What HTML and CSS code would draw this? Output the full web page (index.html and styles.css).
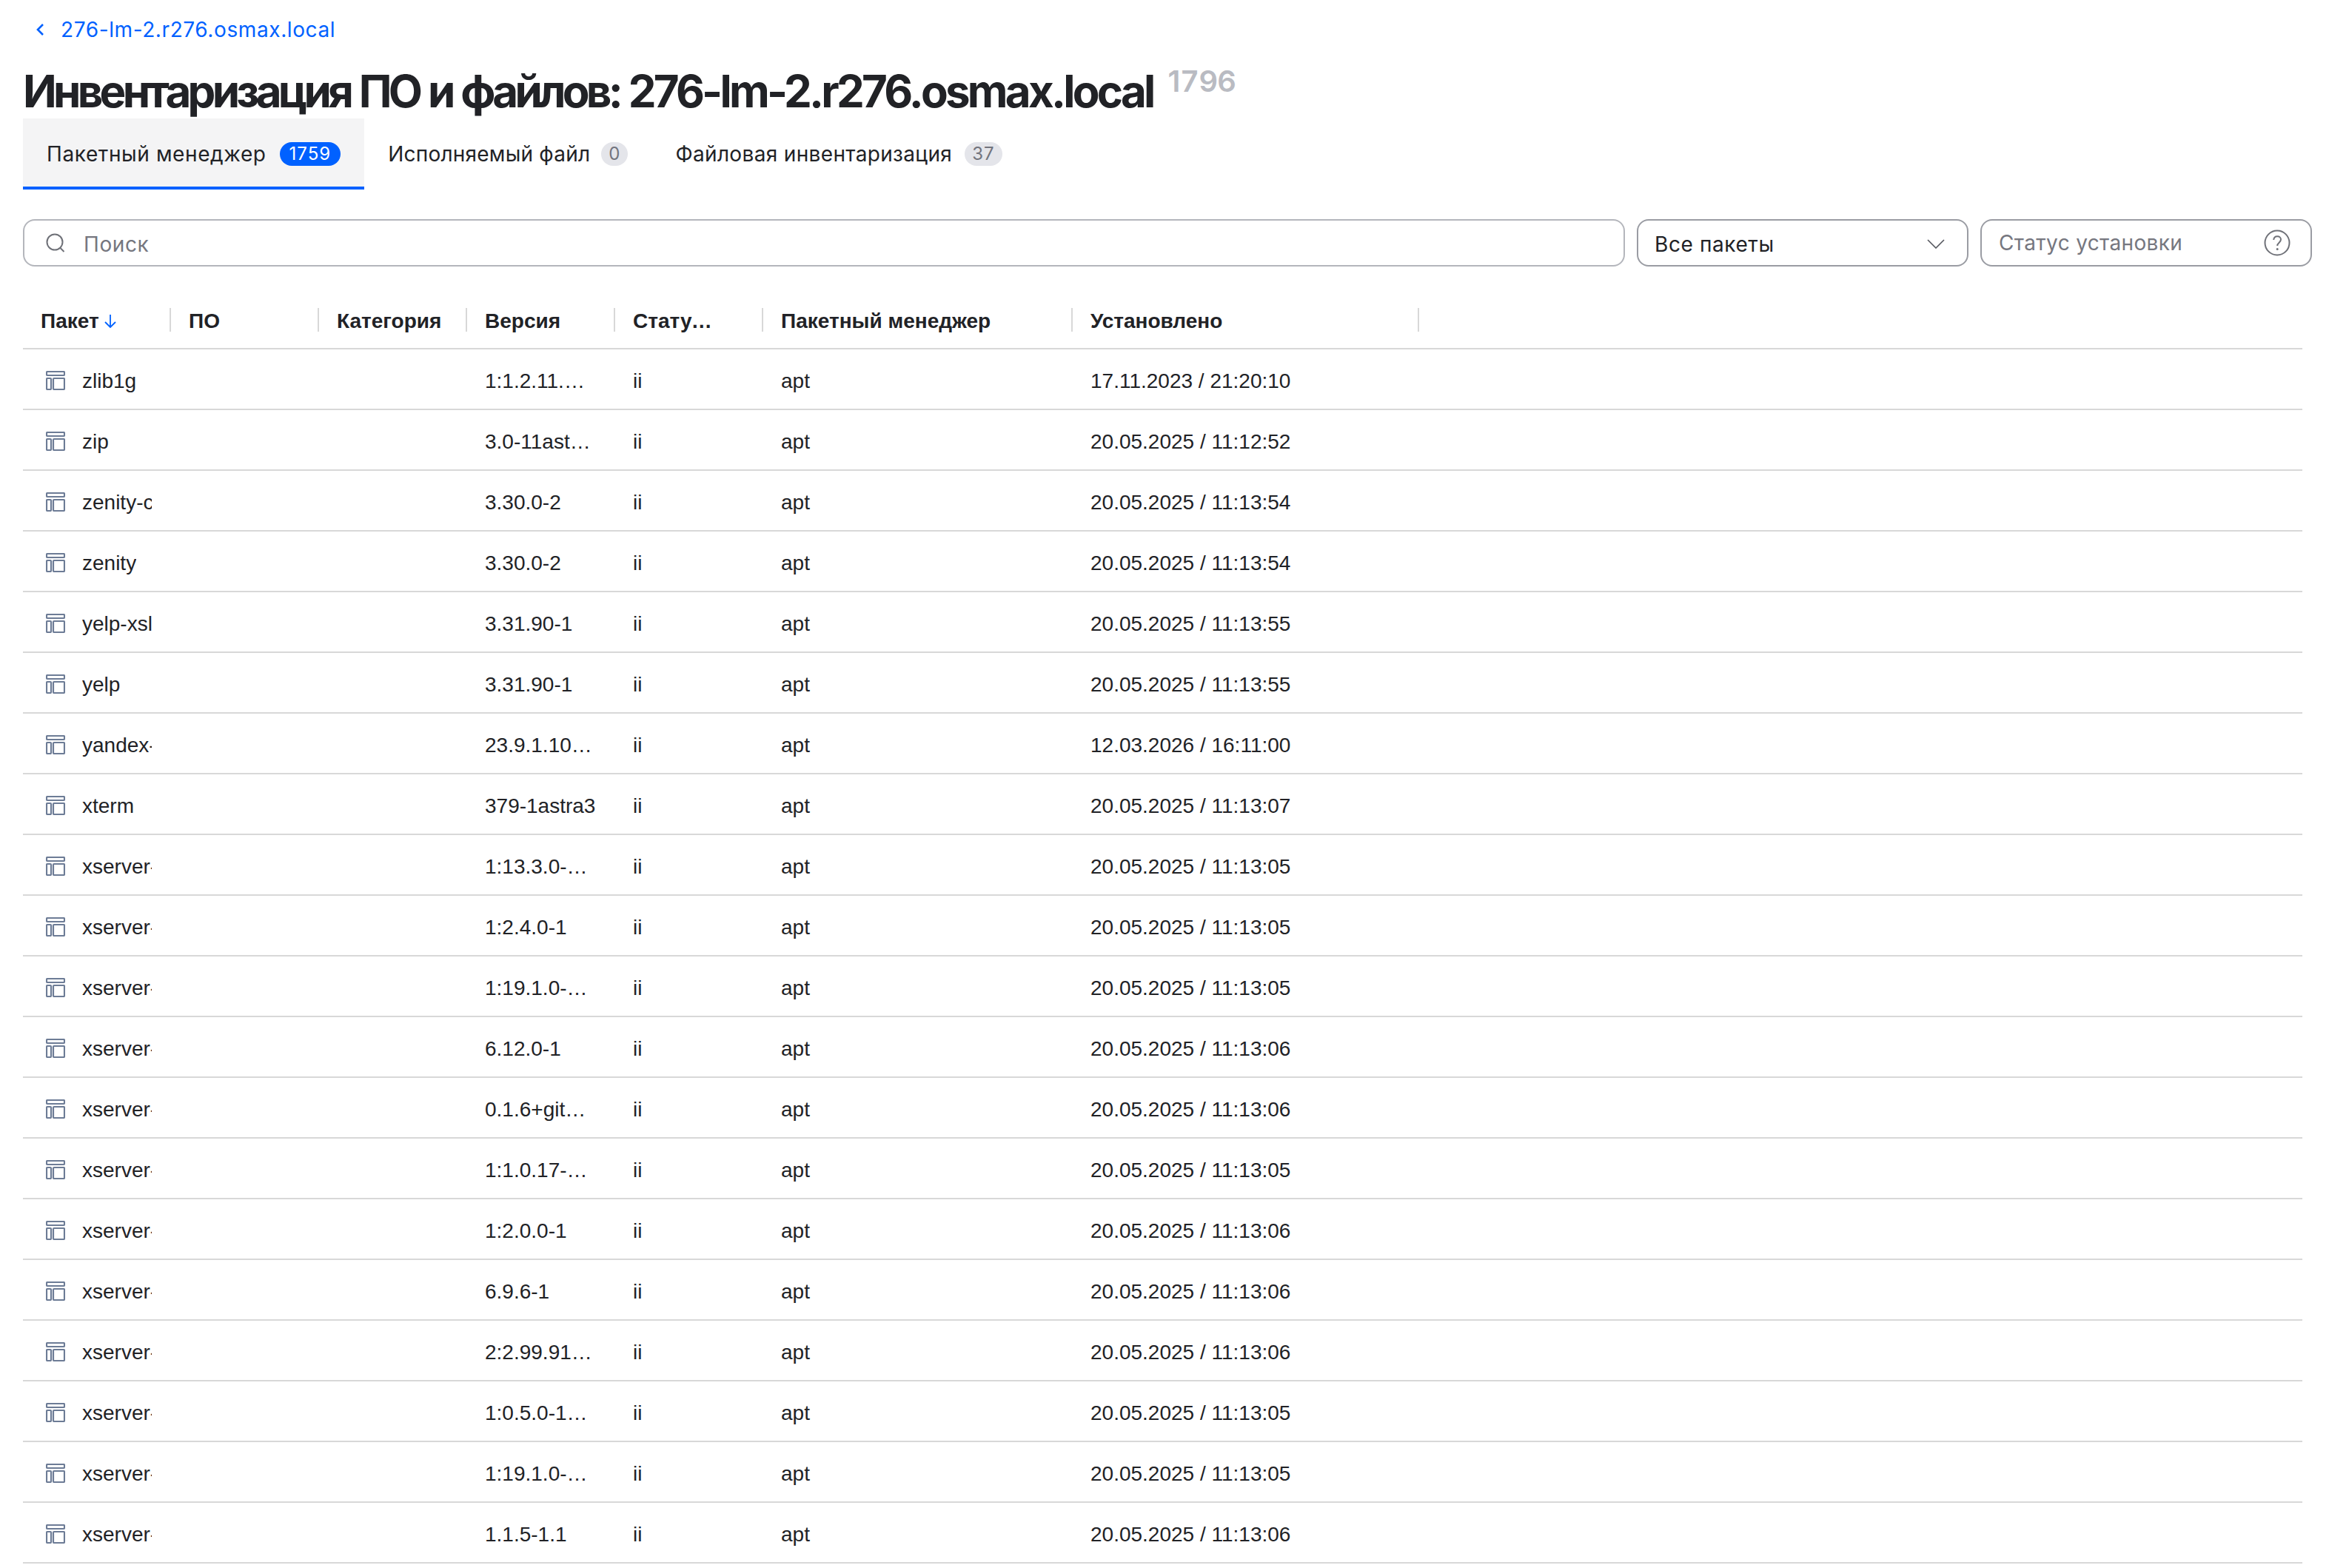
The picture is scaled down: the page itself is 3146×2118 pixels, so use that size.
FILE: index.html
```html
<!DOCTYPE html>
<html lang="ru">
<head>
<meta charset="utf-8">
<title>Инвентаризация ПО и файлов</title>
<link rel="stylesheet" href="styles.css">
</head>
<body>
<main class="page">
  <a class="back" href="#">
    <svg class="back-icon" viewBox="0 0 12 20"><path d="M10 3 3 10l7 7"/></svg>
    <span>276-lm-2.r276.osmax.local</span>
  </a>
  <div class="title-row">
    <h1 class="title">Инвентаризация ПО и файлов: <span class="title-host">276-lm-2.r276.osmax.local</span></h1>
    <span class="title-count"><span class="count-a">17</span><span class="count-b">96</span></span>
  </div>
  <nav class="tabs">
    <a class="tab tab-active"><span>Пакетный менеджер</span><span class="badge badge-blue">1759</span></a>
    <a class="tab tab-b"><span>Исполняемый файл</span><span class="badge">0</span></a>
    <a class="tab tab-c"><span>Файловая инвентаризация</span><span class="badge">37</span></a>
  </nav>
  <div class="filters">
    <label class="field field-search">
      <svg class="search-icon" viewBox="0 0 28 28"><circle cx="13" cy="13" r="10.5"/><path d="m20.5 21 5 5"/></svg>
      <span class="placeholder">Поиск</span>
    </label>
    <div class="field field-select">
      <span class="value">Все пакеты</span>
      <svg class="chevron" viewBox="0 0 24 14"><path d="M1 2l11 11L23 2"/></svg>
    </div>
    <div class="field field-status">
      <span class="placeholder">Статус установки</span>
      <svg class="help" viewBox="0 0 36 36"><circle cx="18" cy="18" r="16.5"/><path d="M13.2 14c.3-3 2.3-4.7 5-4.7 2.800 0 4.800 1.800 4.800 4.300 0 4-4.800 4.200-4.800 8.400"/><circle class="help-dot" cx="18.200" cy="26.500" r="1.500"/></svg>
    </div>
  </div>
  <div class="table">
    <div class="row head">
      <div class="th sep"><span>Пакет</span><svg class="sort" viewBox="0 0 18 20"><path d="M9 1v17M2 11l7 7 7-7"/></svg></div>
      <div class="th sep">ПО</div>
      <div class="th sep">Категория</div>
      <div class="th sep">Версия</div>
      <div class="th sep th-narrow"><span class="ell">Статус установки</span></div>
      <div class="th sep">Пакетный менеджер</div>
      <div class="th sep">Установлено</div>
    </div>
    <div class="row"><div class="td name"><svg class="pkg" viewBox="0 0 26 26"><rect x="1" y="1" width="24" height="5" rx="1"/><rect x="1" y="10" width="6" height="15" rx="1"/><rect x="10" y="10" width="15" height="15" rx="1"/></svg><span class="clip">zlib1g</span></div><div class="td"></div><div class="td"></div><div class="td ver"><span class="ell">1:1.2.11.dfsg-2+deb10u1</span></div><div class="td">ii</div><div class="td">apt</div><div class="td">17.11.2023 / 21:20:10</div></div>
    <div class="row"><div class="td name"><svg class="pkg" viewBox="0 0 26 26"><rect x="1" y="1" width="24" height="5" rx="1"/><rect x="1" y="10" width="6" height="15" rx="1"/><rect x="10" y="10" width="15" height="15" rx="1"/></svg><span class="clip">zip</span></div><div class="td"></div><div class="td"></div><div class="td ver"><span class="ell">3.0-11astra1+b1</span></div><div class="td">ii</div><div class="td">apt</div><div class="td">20.05.2025 / 11:12:52</div></div>
    <div class="row"><div class="td name"><svg class="pkg" viewBox="0 0 26 26"><rect x="1" y="1" width="24" height="5" rx="1"/><rect x="1" y="10" width="6" height="15" rx="1"/><rect x="10" y="10" width="15" height="15" rx="1"/></svg><span class="clip">zenity-common</span></div><div class="td"></div><div class="td"></div><div class="td ver"><span class="ell">3.30.0-2</span></div><div class="td">ii</div><div class="td">apt</div><div class="td">20.05.2025 / 11:13:54</div></div>
    <div class="row"><div class="td name"><svg class="pkg" viewBox="0 0 26 26"><rect x="1" y="1" width="24" height="5" rx="1"/><rect x="1" y="10" width="6" height="15" rx="1"/><rect x="10" y="10" width="15" height="15" rx="1"/></svg><span class="clip">zenity</span></div><div class="td"></div><div class="td"></div><div class="td ver"><span class="ell">3.30.0-2</span></div><div class="td">ii</div><div class="td">apt</div><div class="td">20.05.2025 / 11:13:54</div></div>
    <div class="row"><div class="td name"><svg class="pkg" viewBox="0 0 26 26"><rect x="1" y="1" width="24" height="5" rx="1"/><rect x="1" y="10" width="6" height="15" rx="1"/><rect x="10" y="10" width="15" height="15" rx="1"/></svg><span class="clip">yelp-xsl</span></div><div class="td"></div><div class="td"></div><div class="td ver"><span class="ell">3.31.90-1</span></div><div class="td">ii</div><div class="td">apt</div><div class="td">20.05.2025 / 11:13:55</div></div>
    <div class="row"><div class="td name"><svg class="pkg" viewBox="0 0 26 26"><rect x="1" y="1" width="24" height="5" rx="1"/><rect x="1" y="10" width="6" height="15" rx="1"/><rect x="10" y="10" width="15" height="15" rx="1"/></svg><span class="clip">yelp</span></div><div class="td"></div><div class="td"></div><div class="td ver"><span class="ell">3.31.90-1</span></div><div class="td">ii</div><div class="td">apt</div><div class="td">20.05.2025 / 11:13:55</div></div>
    <div class="row"><div class="td name"><svg class="pkg" viewBox="0 0 26 26"><rect x="1" y="1" width="24" height="5" rx="1"/><rect x="1" y="10" width="6" height="15" rx="1"/><rect x="10" y="10" width="15" height="15" rx="1"/></svg><span class="clip">yandex-browser-stable</span></div><div class="td"></div><div class="td"></div><div class="td ver"><span class="ell">23.9.1.1028-1</span></div><div class="td">ii</div><div class="td">apt</div><div class="td">12.03.2026 / 16:11:00</div></div>
    <div class="row"><div class="td name"><svg class="pkg" viewBox="0 0 26 26"><rect x="1" y="1" width="24" height="5" rx="1"/><rect x="1" y="10" width="6" height="15" rx="1"/><rect x="10" y="10" width="15" height="15" rx="1"/></svg><span class="clip">xterm</span></div><div class="td"></div><div class="td"></div><div class="td ver"><span class="ell">379-1astra3</span></div><div class="td">ii</div><div class="td">apt</div><div class="td">20.05.2025 / 11:13:07</div></div>
    <div class="row"><div class="td name"><svg class="pkg" viewBox="0 0 26 26"><rect x="1" y="1" width="24" height="5" rx="1"/><rect x="1" y="10" width="6" height="15" rx="1"/><rect x="10" y="10" width="15" height="15" rx="1"/></svg><span class="clip">xserver-xorg-video-vmware</span></div><div class="td"></div><div class="td"></div><div class="td ver"><span class="ell">1:13.3.0-2+b1</span></div><div class="td">ii</div><div class="td">apt</div><div class="td">20.05.2025 / 11:13:05</div></div>
    <div class="row"><div class="td name"><svg class="pkg" viewBox="0 0 26 26"><rect x="1" y="1" width="24" height="5" rx="1"/><rect x="1" y="10" width="6" height="15" rx="1"/><rect x="10" y="10" width="15" height="15" rx="1"/></svg><span class="clip">xserver-xorg-video-vesa</span></div><div class="td"></div><div class="td"></div><div class="td ver"><span class="ell">1:2.4.0-1</span></div><div class="td">ii</div><div class="td">apt</div><div class="td">20.05.2025 / 11:13:05</div></div>
    <div class="row"><div class="td name"><svg class="pkg" viewBox="0 0 26 26"><rect x="1" y="1" width="24" height="5" rx="1"/><rect x="1" y="10" width="6" height="15" rx="1"/><rect x="10" y="10" width="15" height="15" rx="1"/></svg><span class="clip">xserver-xorg-video-radeon</span></div><div class="td"></div><div class="td"></div><div class="td ver"><span class="ell">1:19.1.0-1+b1</span></div><div class="td">ii</div><div class="td">apt</div><div class="td">20.05.2025 / 11:13:05</div></div>
    <div class="row"><div class="td name"><svg class="pkg" viewBox="0 0 26 26"><rect x="1" y="1" width="24" height="5" rx="1"/><rect x="1" y="10" width="6" height="15" rx="1"/><rect x="10" y="10" width="15" height="15" rx="1"/></svg><span class="clip">xserver-xorg-video-qxl</span></div><div class="td"></div><div class="td"></div><div class="td ver"><span class="ell">6.12.0-1</span></div><div class="td">ii</div><div class="td">apt</div><div class="td">20.05.2025 / 11:13:06</div></div>
    <div class="row"><div class="td name"><svg class="pkg" viewBox="0 0 26 26"><rect x="1" y="1" width="24" height="5" rx="1"/><rect x="1" y="10" width="6" height="15" rx="1"/><rect x="10" y="10" width="15" height="15" rx="1"/></svg><span class="clip">xserver-xorg-video-nouveau</span></div><div class="td"></div><div class="td"></div><div class="td ver"><span class="ell">0.1.6+git20190308-1</span></div><div class="td">ii</div><div class="td">apt</div><div class="td">20.05.2025 / 11:13:06</div></div>
    <div class="row"><div class="td name"><svg class="pkg" viewBox="0 0 26 26"><rect x="1" y="1" width="24" height="5" rx="1"/><rect x="1" y="10" width="6" height="15" rx="1"/><rect x="10" y="10" width="15" height="15" rx="1"/></svg><span class="clip">xserver-xorg-video-intel</span></div><div class="td"></div><div class="td"></div><div class="td ver"><span class="ell">1:1.0.17-1+b1</span></div><div class="td">ii</div><div class="td">apt</div><div class="td">20.05.2025 / 11:13:05</div></div>
    <div class="row"><div class="td name"><svg class="pkg" viewBox="0 0 26 26"><rect x="1" y="1" width="24" height="5" rx="1"/><rect x="1" y="10" width="6" height="15" rx="1"/><rect x="10" y="10" width="15" height="15" rx="1"/></svg><span class="clip">xserver-xorg-video-fbdev</span></div><div class="td"></div><div class="td"></div><div class="td ver"><span class="ell">1:2.0.0-1</span></div><div class="td">ii</div><div class="td">apt</div><div class="td">20.05.2025 / 11:13:06</div></div>
    <div class="row"><div class="td name"><svg class="pkg" viewBox="0 0 26 26"><rect x="1" y="1" width="24" height="5" rx="1"/><rect x="1" y="10" width="6" height="15" rx="1"/><rect x="10" y="10" width="15" height="15" rx="1"/></svg><span class="clip">xserver-xorg-video-dummy</span></div><div class="td"></div><div class="td"></div><div class="td ver"><span class="ell">6.9.6-1</span></div><div class="td">ii</div><div class="td">apt</div><div class="td">20.05.2025 / 11:13:06</div></div>
    <div class="row"><div class="td name"><svg class="pkg" viewBox="0 0 26 26"><rect x="1" y="1" width="24" height="5" rx="1"/><rect x="1" y="10" width="6" height="15" rx="1"/><rect x="10" y="10" width="15" height="15" rx="1"/></svg><span class="clip">xserver-xorg-video-ati</span></div><div class="td"></div><div class="td"></div><div class="td ver"><span class="ell">2:2.99.917+git-1</span></div><div class="td">ii</div><div class="td">apt</div><div class="td">20.05.2025 / 11:13:06</div></div>
    <div class="row"><div class="td name"><svg class="pkg" viewBox="0 0 26 26"><rect x="1" y="1" width="24" height="5" rx="1"/><rect x="1" y="10" width="6" height="15" rx="1"/><rect x="10" y="10" width="15" height="15" rx="1"/></svg><span class="clip">xserver-xorg-video-amdgpu</span></div><div class="td"></div><div class="td"></div><div class="td ver"><span class="ell">1:0.5.0-1+b1</span></div><div class="td">ii</div><div class="td">apt</div><div class="td">20.05.2025 / 11:13:05</div></div>
    <div class="row"><div class="td name"><svg class="pkg" viewBox="0 0 26 26"><rect x="1" y="1" width="24" height="5" rx="1"/><rect x="1" y="10" width="6" height="15" rx="1"/><rect x="10" y="10" width="15" height="15" rx="1"/></svg><span class="clip">xserver-xorg-video-all</span></div><div class="td"></div><div class="td"></div><div class="td ver"><span class="ell">1:19.1.0-1+b1</span></div><div class="td">ii</div><div class="td">apt</div><div class="td">20.05.2025 / 11:13:05</div></div>
    <div class="row"><div class="td name"><svg class="pkg" viewBox="0 0 26 26"><rect x="1" y="1" width="24" height="5" rx="1"/><rect x="1" y="10" width="6" height="15" rx="1"/><rect x="10" y="10" width="15" height="15" rx="1"/></svg><span class="clip">xserver-xorg-legacy</span></div><div class="td"></div><div class="td"></div><div class="td ver"><span class="ell">1.1.5-1.1</span></div><div class="td">ii</div><div class="td">apt</div><div class="td">20.05.2025 / 11:13:06</div></div>
  </div>
</main>
</body>
</html>
```

FILE: styles.css
```css
* { box-sizing: border-box; }
html, body { margin: 0; padding: 0; background: #fff; overflow: hidden; }
body { color: #212226; font-family: "Inter", "Liberation Sans", sans-serif; }
.page { padding: 24px 23px 0 31px; height: 2118px; overflow: hidden; }

.back { display: flex; align-items: center; gap: 22px; height: 32px; margin-left: 17px; color: #0061ff; font-size: 28px; line-height: 32px; letter-spacing: 0.6px; text-decoration: none; }
.back-icon { width: 12px; height: 20px; fill: none; stroke: #0061ff; stroke-width: 2.6; }

.title-row { display: flex; align-items: flex-start; margin-top: 30px; gap: 20px; height: 74px; }
.title { margin: 0; font-size: 60px; line-height: 74px; font-weight: 700; letter-spacing: -4.7px; word-spacing: 2.1px; white-space: nowrap; }
.title-host { letter-spacing: -3.75px; }
.title-count { font-size: 40px; line-height: 48px; font-weight: 600; color: #b9bbc2; }
.count-a { letter-spacing: 1px; }
.count-b { letter-spacing: -1px; }

.tabs { display: flex; height: 96px; }
.tab { display: flex; align-items: flex-start; gap: 18px; padding: 32px 32px 0; font-size: 28px; line-height: 32px; letter-spacing: 0.6px; border-bottom: 4px solid transparent; white-space: nowrap; }
.tab-b { gap: 15px; letter-spacing: 0.23px; }
.tab-c { gap: 17px; letter-spacing: 0.34px; }
.tab-active { background: #f4f4f5; border-bottom-color: #0061ff; }
.badge { min-width: 36px; height: 32px; padding: 0 10px; border-radius: 16px; background: #e4e5ea; color: #72747d; font-size: 24px; line-height: 32px; letter-spacing: 1px; text-align: center; }
.badge-blue { background: #0061ff; color: #fff; padding: 0 13px; }

.filters { display: flex; gap: 16px; margin-top: 40px; height: 64px; letter-spacing: 0.6px; }
.field { display: flex; align-items: center; height: 64px; padding-top: 4px; border: 2px solid #b4b6bc; border-radius: 16px; font-size: 28px; background: #fff; }
.field-search { flex: 1; padding-left: 28px; gap: 24px; }
.field-select { width: 448px; padding-left: 22px; padding-right: 30px; justify-content: space-between; border-color: #9a9ca3; }
.field-status { width: 448px; padding-left: 23px; padding-right: 27px; padding-top: 0; letter-spacing: 0.35px; justify-content: space-between; border-color: #9a9ca3; }
.placeholder { color: #76777f; }
.value { color: #212226; }
.search-icon { width: 28px; height: 28px; margin-top: -4px; fill: none; stroke: #6f7178; stroke-width: 2; }
.chevron { width: 24px; height: 14px; margin-top: -2px; fill: none; stroke: #55575e; stroke-width: 1.6; }
.help { width: 36px; height: 36px; fill: none; stroke: #6f7178; stroke-width: 2; }
.help-dot { fill: #6f7178; stroke: none; }

.table { margin-top: 32px; width: 3079px; font-family: "Liberation Sans", Arial, sans-serif; font-size: 28px; }
.row { display: grid; grid-template-columns: 200px 200px 200px 200px 200px 418px 468px 1fr; height: 82px; padding-top: 6px; border-bottom: 2px solid #d8d8d8; align-items: center; }
.head { height: 80px; padding-top: 2px; font-weight: 700; }
.th { position: relative; display: flex; align-items: center; gap: 6px; padding: 3px 24px 0; height: 32px; white-space: nowrap; font-size: 28px; }
.th-narrow { padding-right: 64px; }
.sep::after { content: ""; position: absolute; right: 0; top: 0; width: 2px; height: 32px; background: #d8d8d8; }
.sort { width: 18px; height: 20px; fill: none; stroke: #0061ff; stroke-width: 1.800; }
.td { padding: 0 24px; white-space: nowrap; min-width: 0; overflow: hidden; }
.name { display: flex; align-items: center; gap: 23px; padding-left: 31px; padding-right: 26px; }
.ver { padding-right: 26px; }
.pkg { width: 26px; height: 26px; margin-top: -2px; flex: none; fill: none; stroke: #6d7c96; stroke-width: 2.2; }
.clip { min-width: 0; overflow: hidden; }
.ell { display: block; min-width: 0; overflow: hidden; text-overflow: ellipsis; }
```
